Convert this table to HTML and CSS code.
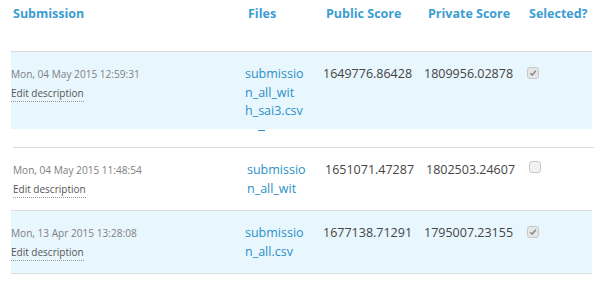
FILE: index.html
```html
<!DOCTYPE html>
<html>
<head>
<meta charset="utf-8">
<link rel="stylesheet" href="styles.css">
</head>
<body>
<div class="board">
  <div class="head shift">
    <div class="h h-sub">Submission</div>
    <div class="h h-files">Files</div>
    <div class="h h-pub">Public Score</div>
    <div class="h h-priv">Private Score</div>
    <div class="h h-sel">Selected?</div>
  </div>

  <div class="row blue r1">
    <div class="c c-sub">
      <div class="date">Mon, 04 May 2015 12:59:31</div>
      <div class="edit"><span>Edit description</span></div>
    </div>
    <div class="c c-files"><a class="file"><span>submissio</span><span>n_all_wit</span><span>h_sai3.csv</span></a></div>
    <div class="c c-pub">1649776.86428</div>
    <div class="c c-priv">1809956.02878</div>
    <div class="c c-sel"><span class="cb checked"><svg viewBox="0 0 10 10" width="8" height="8"><path d="M1.5 5.2 L4 7.6 L8.6 2.2" fill="none" stroke="#8a8a8a" stroke-width="1.8"/></svg></span></div>
  </div>
  <div class="tail"></div>

  <div class="row white r2 shift">
    <div class="c c-sub">
      <div class="date">Mon, 04 May 2015 11:48:54</div>
      <div class="edit"><span>Edit description</span></div>
    </div>
    <div class="c c-files"><a class="file"><span>submissio</span><span>n_all_wit</span></a></div>
    <div class="c c-pub">1651071.47287</div>
    <div class="c c-priv">1802503.24607</div>
    <div class="c c-sel"><span class="cb"></span></div>
  </div>

  <div class="row blue r3">
    <div class="c c-sub">
      <div class="date">Mon, 13 Apr 2015 13:28:08</div>
      <div class="edit"><span>Edit description</span></div>
    </div>
    <div class="c c-files"><a class="file"><span>submissio</span><span>n_all.csv</span></a></div>
    <div class="c c-pub">1677138.71291</div>
    <div class="c c-priv">1795007.23155</div>
    <div class="c c-sel"><span class="cb checked"><svg viewBox="0 0 10 10" width="8" height="8"><path d="M1.5 5.2 L4 7.6 L8.6 2.2" fill="none" stroke="#8a8a8a" stroke-width="1.8"/></svg></span></div>
  </div>
</div>
</body>
</html>
```

FILE: styles.css
```css
html, body {
  margin: 0;
  padding: 0;
  background: #fff;
}
body {
  font-family: "Open Sans", "DejaVu Sans", sans-serif;
  color: #444;
}
.board {
  width: 600px;
  padding-left: 11px;
  box-sizing: border-box;
}
.head, .row {
  display: grid;
  grid-template-columns: 234px 78px 101px 103px 65px;
  width: 581px;
}
.shift {
  margin-left: 2px;
}
.head {
  height: 51px;
  align-items: start;
}
.h {
  font-weight: 700;
  font-size: 12.5px;
  color: #3b9dd2;
  line-height: 17px;
  padding-top: 5px;
}
.h-files { padding-left: 1px; }
.h-pub { padding-left: 1px; }
.h-priv { padding-left: 2px; }
.h-sel { padding-left: 0; }

.row {
  border-top: 1px solid #dcdcdc;
  overflow: hidden;
}
.blue { background: #e8f6fd; }
.white { background: #fff; }
.r1 { height: 77px; }
.r2 { height: 62px; margin-top: 18px; }
.r3 { height: 62px; border-bottom: 1px solid #dcdcdc; }

.c {
  padding-top: 13px;
  font-size: 12.5px;
  line-height: 18.5px;
}
.date {
  font-size: 10.1px;
  color: #808080;
  line-height: 18px;
}
.edit {
  font-size: 10px;
  color: #555;
  line-height: 20px;
}
.edit span {
  border-bottom: 1px dotted #999;
  padding-bottom: 1px;
}
.file {
  color: #2a90c8;
  font-size: 12.5px;
  display: flex;
  flex-direction: column;
  white-space: nowrap;
}
.c-pub, .c-priv {
  line-height: 18px;
  padding-top: 13px;
}
.c-sel {
  padding-top: 12px;
}
.cb {
  display: inline-flex;
  align-items: center;
  justify-content: center;
  width: 12px;
  height: 12px;
  border: 1px solid #c8c8c8;
  border-radius: 3px;
  background: #f2f2f2;
  box-sizing: border-box;
}
.cb.checked {
  background: #e6e6e6;
}
.tail {
  width: 7px;
  height: 1px;
  margin-left: 247px;
  margin-top: 1px;
  margin-bottom: -2px;
  background: #2a90c8;
}
```
